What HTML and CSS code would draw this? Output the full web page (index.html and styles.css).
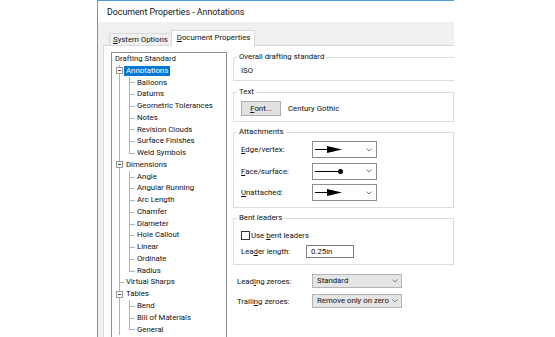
FILE: index.html
```html
<!DOCTYPE html>
<html>
<head>
<meta charset="utf-8">
<link rel="stylesheet" href="styles.css">
</head>
<body>
<div class="window">
  <div class="titlebar">Document Properties - Annotations</div>
  <div class="tabs">
    <div class="tab"><u>S</u>ystem Options</div>
    <div class="tab active"><u>D</u>ocument Properties</div>
  </div>
  <div class="panel">
    <div class="tree">
      <div class="root">Drafting Standard</div>
      <ul class="l1">
        <li class="n1">
          <div class="row"><span class="exp"></span><span class="lbl sel">Annotations</span></div>
          <ul class="l2">
            <li class="n2">Balloons</li>
            <li class="n2">Datums</li>
            <li class="n2">Geometric Tolerances</li>
            <li class="n2">Notes</li>
            <li class="n2">Revision Clouds</li>
            <li class="n2">Surface Finishes</li>
            <li class="n2">Weld Symbols</li>
          </ul>
        </li>
        <li class="n1">
          <div class="row"><span class="exp"></span><span class="lbl">Dimensions</span></div>
          <ul class="l2">
            <li class="n2">Angle</li>
            <li class="n2">Angular Running</li>
            <li class="n2">Arc Length</li>
            <li class="n2">Chamfer</li>
            <li class="n2">Diameter</li>
            <li class="n2">Hole Callout</li>
            <li class="n2">Linear</li>
            <li class="n2">Ordinate</li>
            <li class="n2">Radius</li>
          </ul>
        </li>
        <li class="n1">
          <div class="row leaf"><span class="lbl">Virtual Sharps</span></div>
        </li>
        <li class="n1">
          <div class="row"><span class="exp"></span><span class="lbl">Tables</span></div>
          <ul class="l2">
            <li class="n2">Bend</li>
            <li class="n2">Bill of Materials</li>
            <li class="n2">General</li>
          </ul>
        </li>
      </ul>
    </div>
    <div class="props">
      <fieldset class="group g1">
        <legend>Overall drafting standard</legend>
        <div class="value">ISO</div>
      </fieldset>
      <fieldset class="group g2">
        <legend>Text</legend>
        <div class="fontrow">
          <button class="btn" type="button"><u>F</u>ont...</button>
          <span class="fontname">Century Gothic</span>
        </div>
      </fieldset>
      <fieldset class="group g3">
        <legend>Attachments</legend>
        <div class="arow">
          <span class="alabel"><u>E</u>dge/vertex:</span>
          <div class="combo white">
            <svg class="sym" width="30" height="9" viewBox="0 0 30 9"><line x1="0" y1="4.5" x2="13" y2="4.5" stroke="#000" stroke-width="1"/><polygon points="12,1 27,4.5 12,8" fill="#000"/></svg>
            <svg class="chev" width="6" height="4" viewBox="0 0 6 4"><polyline points="0.5,0.5 3,3 5.5,0.5" fill="none" stroke="#7a7a7a" stroke-width="1"/></svg>
          </div>
        </div>
        <div class="arow">
          <span class="alabel"><u>F</u>ace/surface:</span>
          <div class="combo white">
            <svg class="sym" width="30" height="9" viewBox="0 0 30 9"><line x1="0" y1="4.5" x2="24" y2="4.5" stroke="#000" stroke-width="1"/><circle cx="25.5" cy="4.5" r="2.5" fill="#000"/></svg>
            <svg class="chev" width="6" height="4" viewBox="0 0 6 4"><polyline points="0.5,0.5 3,3 5.5,0.5" fill="none" stroke="#7a7a7a" stroke-width="1"/></svg>
          </div>
        </div>
        <div class="arow">
          <span class="alabel"><u>U</u>nattached:</span>
          <div class="combo white">
            <svg class="sym" width="30" height="9" viewBox="0 0 30 9"><line x1="0" y1="4.5" x2="13" y2="4.5" stroke="#000" stroke-width="1"/><polygon points="12,1 27,4.5 12,8" fill="#000"/></svg>
            <svg class="chev" width="6" height="4" viewBox="0 0 6 4"><polyline points="0.5,0.5 3,3 5.5,0.5" fill="none" stroke="#7a7a7a" stroke-width="1"/></svg>
          </div>
        </div>
      </fieldset>
      <fieldset class="group g4">
        <legend>Bent leaders</legend>
        <div class="check"><span class="box"></span><span>Use <u>b</u>ent leaders</span></div>
        <div class="lrow">
          <span class="llabel">Lea<u>d</u>er length:</span>
          <div class="textbox">0.25in</div>
        </div>
      </fieldset>
      <div class="zrow first">
        <span class="zlabel">Lead<u>i</u>ng zeroes:</span>
        <div class="combo gray">
          <span>Standard</span>
          <svg class="chev" width="6" height="4" viewBox="0 0 6 4"><polyline points="0.5,0.5 3,3 5.5,0.5" fill="none" stroke="#7a7a7a" stroke-width="1"/></svg>
        </div>
      </div>
      <div class="zrow">
        <span class="zlabel">Traili<u>n</u>g zeroes:</span>
        <div class="combo gray">
          <span>Remove only on zero</span>
          <svg class="chev" width="6" height="4" viewBox="0 0 6 4"><polyline points="0.5,0.5 3,3 5.5,0.5" fill="none" stroke="#7a7a7a" stroke-width="1"/></svg>
        </div>
      </div>
    </div>
  </div>
</div>
</body>
</html>
```

FILE: styles.css
```css
* { box-sizing: border-box; }
html, body { margin: 0; padding: 0; background: #fff; }
body {
  font-family: Roboto, "Noto Sans", sans-serif;
  font-size: 7.8px;
  color: #111;
}
u { text-decoration-thickness: 1px; text-underline-offset: 1px; }

.window {
  margin-left: 97px;
  width: 357px;
  height: 337px;
  border-left: 1px solid #4a9be0;
  border-top: 1px solid #4a9be0;
  background: #f0f0f0;
  overflow: hidden;
  display: flex;
  flex-direction: column;
}
.titlebar {
  flex: none;
  height: 21px;
  background: #fff;
  padding-left: 9px;
  font-size: 8.8px;
  line-height: 23px;
}
.tabs {
  flex: none;
  height: 24px;
  margin-bottom: -1px;
  padding-left: 11px;
  display: flex;
  align-items: flex-end;
}
.tab {
  height: 12px;
  margin-bottom: 1px;
  padding: 0 3px 0 3px;
  border: 1px solid #d9d9d9;
  border-bottom: none;
  line-height: 11px;
  white-space: nowrap;
}
.tab.active {
  height: 16px;
  margin-bottom: 0;
  margin-left: -1px;
  padding: 0 4px 0 5px;
  background: #fff;
  line-height: 13px;
  position: relative;
  z-index: 1;
}
.panel {
  flex: 1;
  min-height: 0;
  margin-left: 5px;
  background: #fff;
  border-top: 1px solid #d9d9d9;
  border-left: 1px solid #d9d9d9;
  padding: 5px 0 0 7px;
  display: flex;
  align-items: flex-start;
}

/* tree */
.tree {
  flex: none;
  width: 116px;
  height: 300px;
  margin-top: 1px;
  border: 1px solid #8d9097;
  background: #fff;
  padding-left: 3px;
  overflow: hidden;
  white-space: nowrap;
}
.tree ul { list-style: none; margin: 0; padding: 0; }
.root { height: 11.78px; line-height: 11.78px; }
.tree .l1 { margin-left: 4px; }
.n1 { border-left: 1px solid #b4b4b4; }
.row {
  position: relative;
  height: 11.78px;
  padding-left: 4px;
  display: flex;
  align-items: center;
}
.row.leaf::before {
  content: "";
  position: absolute;
  left: 0;
  top: 50%;
  width: 4px;
  border-top: 1px solid #b4b4b4;
}
.exp {
  position: absolute;
  left: -4px;
  top: 2.4px;
  width: 7px;
  height: 7px;
  border: 1px solid #9a9a9a;
  background: #fff;
}
.exp::after {
  content: "";
  position: absolute;
  left: 1px;
  top: 2px;
  width: 3px;
  height: 1px;
  background: #444;
}
.lbl { padding: 0 2px; line-height: 10px; }
.lbl.sel { background: #0078d7; color: #fff; }
.tree .l2 { margin-left: 9px; }
.n2 {
  position: relative;
  height: 11.78px;
  line-height: 11.78px;
  padding-left: 8px;
}
.n2::before {
  content: "";
  position: absolute;
  left: 0;
  top: 0;
  bottom: 0;
  border-left: 1px solid #b4b4b4;
}
.n2:last-child::before { bottom: 50%; }
.n2::after {
  content: "";
  position: absolute;
  left: 0;
  top: 50%;
  width: 6px;
  border-top: 1px solid #b4b4b4;
}

/* right side */
.props {
  flex: 1;
  min-width: 0;
  margin-left: 6px;
  display: flex;
  flex-direction: column;
}
.group {
  margin: 0;
  min-width: 0;
  border: 1px solid #dcdcdc;
  padding: 0 0 0 7px;
}
.group legend {
  padding: 0 2px;
  margin-left: -4px;
  line-height: 12px;
}
.g1 { margin-right: -20px; padding-top: 2px; padding-bottom: 3px; }
.value { line-height: 12px; }
.g2 { margin-top: 5px; padding-top: 3px; padding-bottom: 5px; }
.fontrow { display: flex; align-items: center; gap: 7px; }
.btn {
  width: 40px;
  height: 15px;
  margin: 0;
  padding: 0;
  border: 1px solid #adadad;
  background: #e1e1e1;
  font: inherit;
  color: #111;
  line-height: 13px;
}
.g3 {
  margin-top: 4px;
  padding-top: 3px;
  padding-bottom: 6px;
  display: flex;
  flex-direction: column;
  gap: 4.5px;
}
.arow { display: flex; align-items: center; }
.alabel { width: 71px; flex: none; }
.combo {
  display: flex;
  align-items: center;
  justify-content: space-between;
  white-space: nowrap;
}
.combo.white {
  width: 65px;
  height: 17px;
  border: 1px solid #8c8c8c;
  background: #fff;
  padding: 0 4px 0 2px;
}
.sym { display: block; }
.chev { display: block; flex: none; }
.g4 { margin-top: 4px; padding-top: 5px; padding-bottom: 6px; }
.check { display: flex; align-items: center; height: 12px; }
.box {
  width: 9px;
  height: 9px;
  border: 1px solid #333;
  background: #fff;
  margin-right: 1px;
}
.lrow { display: flex; align-items: center; margin-top: 4px; }
.llabel { width: 65px; flex: none; }
.textbox {
  width: 48px;
  height: 13px;
  border: 1px solid #7a7a7a;
  background: #fff;
  padding-left: 4px;
  line-height: 11px;
}
.zrow { display: flex; align-items: center; margin-top: 6px; padding-left: 4px; }
.zrow.first { margin-top: 9px; }
.zlabel { width: 75px; flex: none; }
.combo.gray {
  width: 90px;
  height: 14px;
  border: 1px solid #b4b4b4;
  background: #e5e5e5;
  padding: 0 3px 0 4px;
  line-height: 12px;
}
```
